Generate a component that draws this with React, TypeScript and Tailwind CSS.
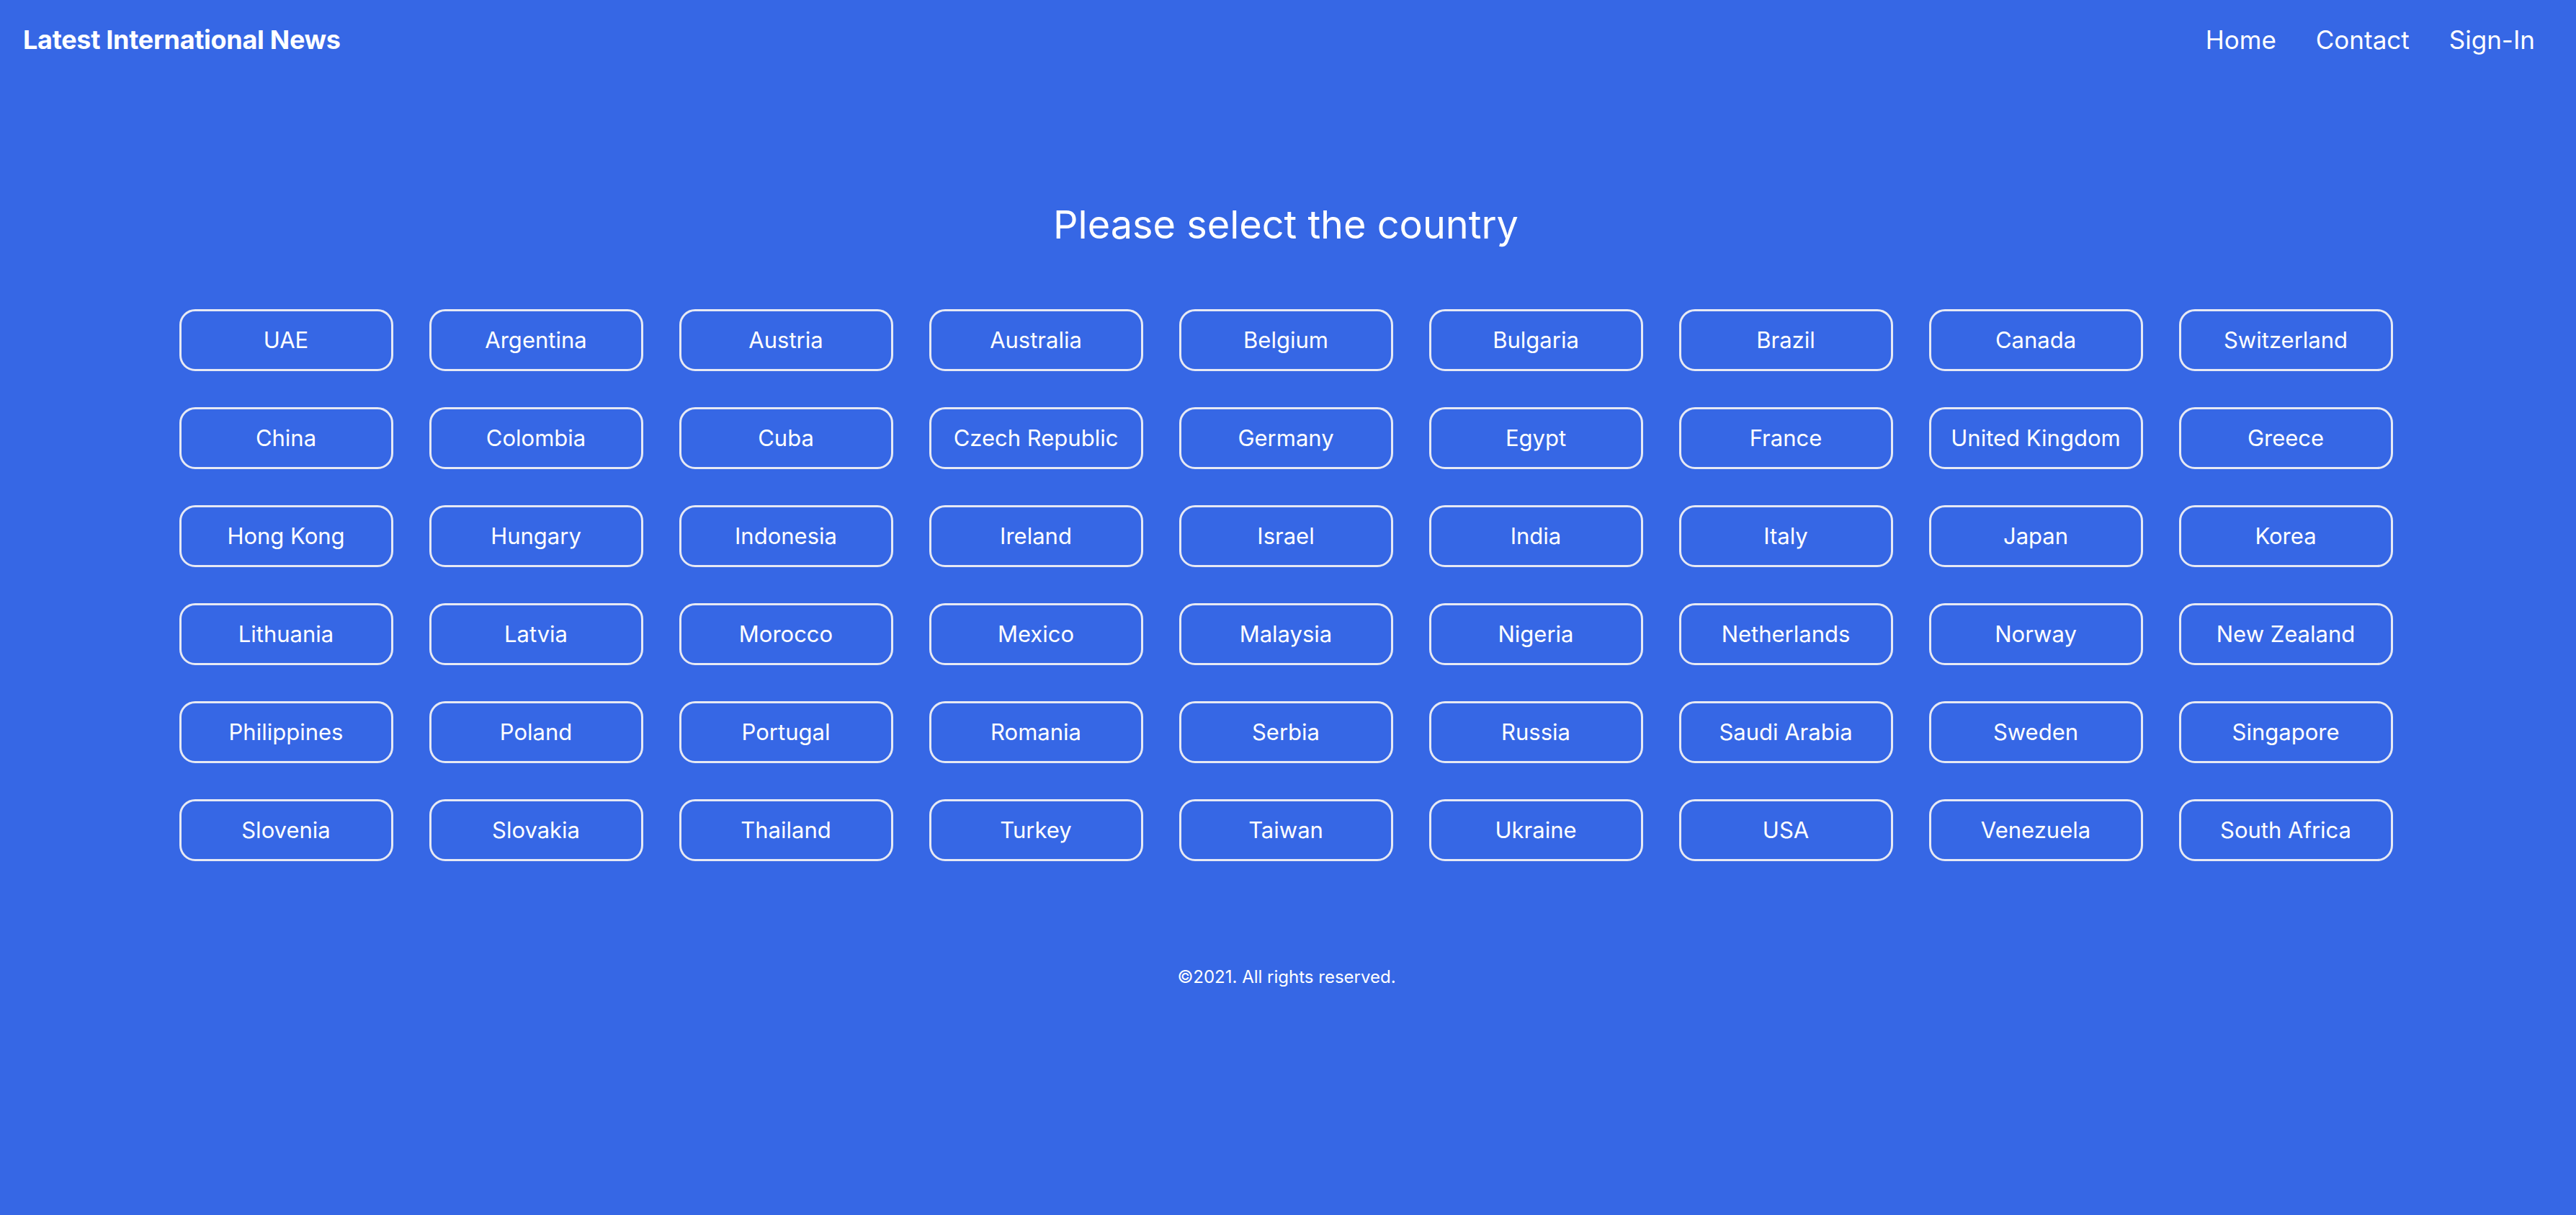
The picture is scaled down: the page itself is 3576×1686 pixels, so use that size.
const countries: string[] = [
  "UAE", "Argentina", "Austria", "Australia", "Belgium", "Bulgaria", "Brazil", "Canada", "Switzerland",
  "China", "Colombia", "Cuba", "Czech Republic", "Germany", "Egypt", "France", "United Kingdom", "Greece",
  "Hong Kong", "Hungary", "Indonesia", "Ireland", "Israel", "India", "Italy", "Japan", "Korea",
  "Lithuania", "Latvia", "Morocco", "Mexico", "Malaysia", "Nigeria", "Netherlands", "Norway", "New Zealand",
  "Philippines", "Poland", "Portugal", "Romania", "Serbia", "Russia", "Saudi Arabia", "Sweden", "Singapore",
  "Slovenia", "Slovakia", "Thailand", "Turkey", "Taiwan", "Ukraine", "USA", "Venezuela", "South Africa",
];

function App() {
  return (
    <div className="min-h-[1686px] bg-[#3667e5] text-white font-['Inter',sans-serif]">
      {/* Navbar */}
      <header className="h-[110px] flex items-center justify-between pl-[32px] pr-[57px]">
        <a className="text-[36px] font-bold tracking-[-0.3px]">Latest International News</a>
        <nav className="flex items-center gap-[55px] text-[35px]">
          <a>Home</a>
          <a>Contact</a>
          <a>Sign-In</a>
        </nav>
      </header>

      {/* Country picker */}
      <main className="flex flex-col items-center pr-[6px]">
        <h1 className="mt-[168px] text-[54px] leading-[68px]">Please select the country</h1>
        <div className="mt-[83px] grid grid-cols-9 gap-[50px]">
          {countries.map((c) => (
            <button
              key={c}
              className="w-[297px] h-[86px] rounded-[22px] border-[3px] border-[#e6e9f4] text-[31px] flex items-center justify-center"
            >
              {c}
            </button>
          ))}
        </div>
      </main>

      {/* Footer */}
      <footer className="mt-[146px] text-center text-[24px] leading-[30px] pr-[4px]">
        ©2021. All rights reserved.
      </footer>
    </div>
  );
}

export default App;
